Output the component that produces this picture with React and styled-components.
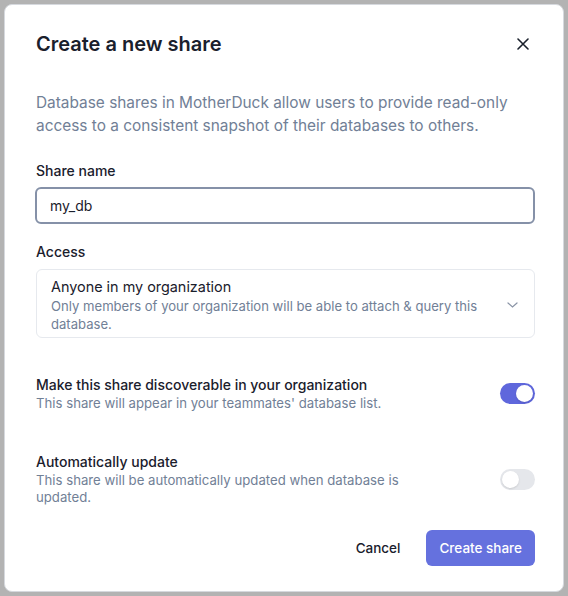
import React from "react";
import styled, { createGlobalStyle } from "styled-components";

const Global = createGlobalStyle`
  html, body { margin: 0; padding: 0; }
  body {
    background: #b3b3b3;
    font-family: Inter, "Noto Sans", sans-serif;
    -webkit-font-smoothing: antialiased;
  }
  * { box-sizing: border-box; }
`;

const Overlay = styled.div`
  width: 568px;
  height: 596px;
  padding: 4px;
  display: flex;
`;

const Modal = styled.section`
  flex: 1;
  background: #ffffff;
  border-radius: 8px;
  border: 1px solid #d6d9de;
  padding: 0 28px 0 30px;
  display: flex;
  flex-direction: column;
`;

const Header = styled.header`
  display: flex;
  align-items: center;
  justify-content: space-between;
  padding-top: 25px;
  height: 53px;
`;

const Title = styled.h2`
  margin: 0;
  font-size: 20px;
  line-height: 28px;
  font-weight: 600;
  color: #1a202c;
  padding-left: 1px;
`;

const CloseButton = styled.button`
  width: 24px;
  height: 24px;
  border: none;
  background: transparent;
  display: flex;
  align-items: center;
  justify-content: center;
  padding: 0;
  margin-right: 0;
  color: #1a202c;
  cursor: pointer;
`;

const Description = styled.p`
  margin: 33px 0 0;
  font-size: 15.4px;
  line-height: 23px;
  color: #718096;
  padding-left: 1px;
`;

const Field = styled.div`
  display: flex;
  flex-direction: column;
  margin-top: ${(p) => p.$top}px;
`;

const Label = styled.label`
  font-size: 14px;
  line-height: 20px;
  font-weight: 500;
  color: #1a202c;
  margin-bottom: ${(p) => p.$gap}px;
  padding-left: 1px;
`;

const Input = styled.input`
  height: 37px;
  width: 100%;
  border: 2px solid #8591a8;
  border-radius: 6px;
  padding: 0 13px;
  font-family: inherit;
  font-size: 14px;
  color: #1a202c;
  outline: none;
  background: #fff;
`;

const Select = styled.div`
  display: flex;
  align-items: center;
  justify-content: space-between;
  border: 1px solid #e6e9ee;
  border-radius: 6px;
  padding: 7px 16px 4px 14px;
  height: 69px;
  margin-left: 1px;
`;

const SelectText = styled.div`
  display: flex;
  flex-direction: column;
  max-width: 440px;
`;

const OptionTitle = styled.div`
  font-size: 14.4px;
  line-height: 20px;
  color: #1a202c;
`;

const OptionDesc = styled.div`
  font-size: 13.1px;
  line-height: 18px;
  color: #718096;
`;

const ToggleRow = styled.div`
  display: flex;
  align-items: center;
  justify-content: space-between;
  margin-top: ${(p) => p.$top}px;
  padding-left: 1px;
`;

const ToggleText = styled.div`
  display: flex;
  flex-direction: column;
  max-width: 378px;
`;

const ToggleTitle = styled.div`
  font-size: 14px;
  line-height: 20px;
  font-weight: 500;
  color: #1a202c;
`;

const ToggleDesc = styled.div`
  font-size: 13.2px;
  line-height: 17px;
  color: #718096;
`;

const Switch = styled.span`
  width: 35px;
  height: 21px;
  border-radius: 11px;
  background: ${(p) => (p.$on ? "#5f67dc" : "#e5e7eb")};
  display: flex;
  align-items: center;
  justify-content: ${(p) => (p.$on ? "flex-end" : "flex-start")};
  padding: 2px;
  flex-shrink: 0;
`;

const Thumb = styled.span`
  width: 17px;
  height: 17px;
  border-radius: 50%;
  background: #fff;
  box-shadow: 0 1px 2px rgba(0, 0, 0, 0.12);
`;

const Footer = styled.footer`
  display: flex;
  justify-content: flex-end;
  align-items: center;
  gap: 13px;
  margin-top: 24px;
`;

const Button = styled.button`
  height: 36px;
  padding: 0 13px;
  border-radius: 6px;
  border: none;
  font-family: inherit;
  font-size: 13.5px;
  font-weight: 500;
  background: ${(p) => (p.$primary ? "#6571de" : "transparent")};
  color: ${(p) => (p.$primary ? "#ffffff" : "#1a202c")};
  cursor: pointer;
`;

export default function App() {
  return (
    <>
      <Global />
      <Overlay>
        <Modal>
          <Header>
            <Title>Create a new share</Title>
            <CloseButton aria-label="Close">
              <svg width="12" height="12" viewBox="0 0 12 12">
                <path d="M1 1L11 11M11 1L1 11" stroke="currentColor" strokeWidth="1.6" strokeLinecap="round" />
              </svg>
            </CloseButton>
          </Header>
          <Description>
            Database shares in MotherDuck allow users to provide read-only access to a consistent snapshot of their databases to others.
          </Description>
          <Field $top={24}>
            <Label $gap={6}>Share name</Label>
            <Input defaultValue="my_db" />
          </Field>
          <Field $top={18}>
            <Label $gap={7}>Access</Label>
            <Select>
              <SelectText>
                <OptionTitle>Anyone in my organization</OptionTitle>
                <OptionDesc>
                  Only members of your organization will be able to attach &amp; query this database.
                </OptionDesc>
              </SelectText>
              <svg width="11" height="6" viewBox="0 0 11 6">
                <path d="M1 1L5.5 5L10 1" stroke="#8a94a6" strokeWidth="1.2" fill="none" strokeLinecap="round" />
              </svg>
            </Select>
          </Field>
          <ToggleRow $top={37}>
            <ToggleText>
              <ToggleTitle>Make this share discoverable in your organization</ToggleTitle>
              <ToggleDesc>This share will appear in your teammates' database list.</ToggleDesc>
            </ToggleText>
            <Switch $on>
              <Thumb />
            </Switch>
          </ToggleRow>
          <ToggleRow $top={40}>
            <ToggleText>
              <ToggleTitle>Automatically update</ToggleTitle>
              <ToggleDesc>This share will be automatically updated when database is updated.</ToggleDesc>
            </ToggleText>
            <Switch>
              <Thumb />
            </Switch>
          </ToggleRow>
          <Footer>
            <Button>Cancel</Button>
            <Button $primary>Create share</Button>
          </Footer>
        </Modal>
      </Overlay>
    </>
  );
}
